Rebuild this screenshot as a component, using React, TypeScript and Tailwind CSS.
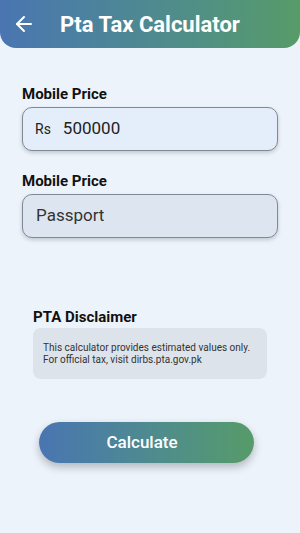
import { ArrowLeft } from "lucide-react";

export default function App() {
  return (
    <div
      className="min-h-[533px] w-full bg-[#edf3fb] pb-10"
      style={{ fontFamily: "Roboto, 'Noto Sans', sans-serif" }}
    >
      <div className="flex h-[48px] items-center rounded-b-[16px] bg-gradient-to-r from-[#4a75b1] to-[#579b68] px-[12px]">
        <ArrowLeft className="h-[24px] w-[24px] text-white" strokeWidth={2} />
        <h1 className="ml-[24px] text-[22px] font-bold text-white">Pta Tax Calculator</h1>
      </div>

      <div className="px-[22px] pt-[37px]">
        <p className="text-[15px] font-bold leading-[18px] text-[#111]">Mobile Price</p>
        <div className="mt-[4px] flex h-[44px] items-center rounded-[10px] border border-[#7f8a96] bg-[#e3eefa] px-[12px] shadow-[0_2px_4px_rgba(0,0,0,0.18)]">
          <span className="text-[14px] text-[#222]">Rs</span>
          <span className="ml-[12px] text-[17px] text-[#222]">500000</span>
        </div>

        <p className="mt-[21px] text-[15px] font-bold leading-[18px] text-[#111]">Mobile Price</p>
        <div className="mt-[4px] flex h-[44px] items-center rounded-[10px] border border-[#7f8a96] bg-[#dde6f0] px-[13px] shadow-[0_2px_4px_rgba(0,0,0,0.18)]">
          <span className="text-[17px] text-[#333]">Passport</span>
        </div>
      </div>

      <div className="px-[33px] pt-[70px]">
        <p className="text-[15px] font-bold leading-[18px] text-[#111]">PTA Disclaimer</p>
        <div className="mt-[2px] rounded-[8px] bg-[#dde3ea] px-[10px] pt-[14px] pb-[13px]">
          <p className="text-[10px] leading-[12px] text-[#333]">
            This calculator provides estimated values only.
            <br />
            For official tax, visit dirbs.pta.gov.pk
          </p>
        </div>
      </div>

      <div className="flex justify-center pt-[43px] pr-[8px]">
        <button className="flex h-[41px] w-[215px] items-center justify-center rounded-full bg-gradient-to-r from-[#4a75b1] to-[#579b68] pr-[8px] text-[17px] font-medium text-white shadow-[0_4px_8px_rgba(0,0,0,0.25)]">
          Calculate
        </button>
      </div>
    </div>
  );
}
